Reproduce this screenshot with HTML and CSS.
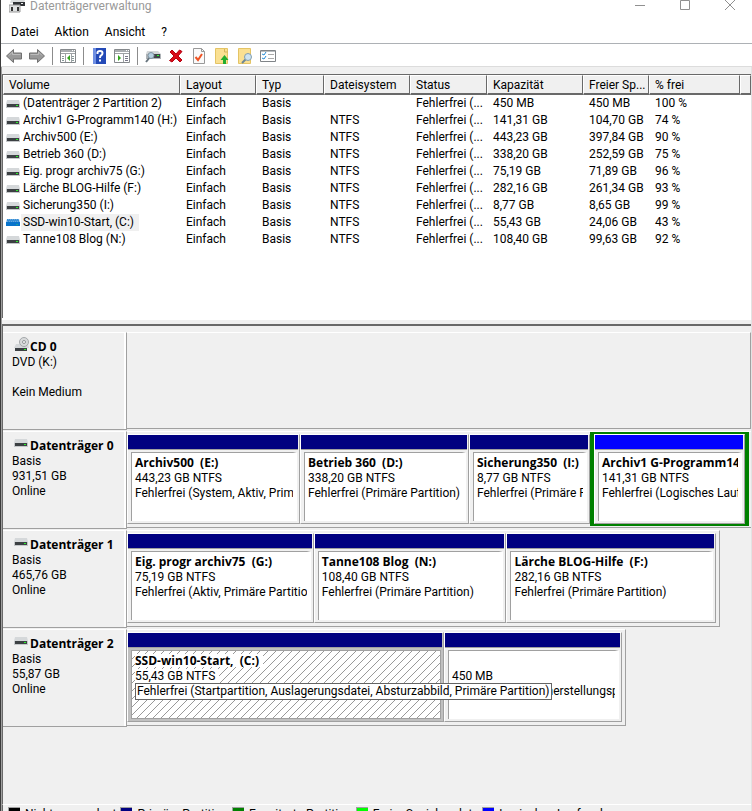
FILE: index.html
```html
<!DOCTYPE html>
<html lang="de">
<head>
<meta charset="utf-8">
<title>Datenträgerverwaltung</title>
<link rel="stylesheet" href="styles.css">
</head>
<body>
<svg class="defs" aria-hidden="true">
  <symbol id="drive" viewBox="0 0 14 8">
    <path d="M1 0h12l1 4H0z" fill="#d5d8da"/>
    <path d="M0 4h14v4H0z" fill="#c4c7c9"/>
    <path d="M1 4h12v3H1z" fill="#3c4043"/>
    <path d="M10 5h2v1h-2z" fill="#2bf02b"/>
  </symbol>
  <symbol id="drive-selected" viewBox="0 0 14 8">
    <path d="M1 0h12l1 4H0z" fill="#68a9de"/>
    <path d="M0 3h14v4H0z" fill="#0873cb"/>
    <path d="M1 1h1m1 0h1m1 0h1m1 0h1m1 0h1m1 0h1M2 2h1m1 0h1m1 0h1m1 0h1m1 0h1m1 0h1" stroke="#0873cb"/>
    <path d="M10 5h2v1h-2z" fill="#16a29a"/>
  </symbol>
</svg>
<div class="window">
  <header class="titlebar">
    <svg class="app-icon" width="16" height="16" viewBox="0 0 16 16"><path d="M2 3h14l-1 3H1z" fill="#d9dcdd"/><path d="M4 5h12v4H4z" fill="#303336"/><path d="M12 6h2v1h-2z" fill="#eee"/><path d="M0 8h11v7H0z" fill="#dfe1e2" stroke="#999" /><path d="M2 10h2v4H2zM8 10h2v4H8z" fill="#333"/></svg>
    <h1>Datenträgerverwaltung</h1>
    <div class="window-buttons">
      <button aria-label="Minimieren"><svg width="10" height="10" viewBox="0 0 10 10"><path d="M0 5.500h10" stroke="#909090"/></svg></button>
      <button aria-label="Maximieren"><svg width="10" height="10" viewBox="0 0 10 10"><path d="M.5.500h9v9h-9z" fill="none" stroke="#909090"/></svg></button>
      <button aria-label="Schließen"><svg width="10" height="10" viewBox="0 0 10 10"><path d="M0 0l10 10M10 0L0 10" stroke="#909090"/></svg></button>
    </div>
  </header>
  <nav class="menubar">
    <button>Datei</button><button>Aktion</button><button>Ansicht</button><button>?</button>
  </nav>
  <div class="toolbar" role="toolbar">
    <button aria-label="Zurück"><svg width="16" height="16" viewBox="0 0 16 16"><path d="M.5 8L7.500 1.500V5h8v6h-8v3.500z" fill="#999" stroke="#717171"/><path d="M3 7.500L6.500 4v2.500h8" fill="none" stroke="#bcbcbc"/></svg></button>
    <button aria-label="Vorwärts"><svg width="16" height="16" viewBox="0 0 16 16"><path d="M15.500 8L8.500 1.500V5h-8v6h8v3.500z" fill="#999" stroke="#717171"/><path d="M1.500 6.500h8V4L13 7.500" fill="none" stroke="#bcbcbc"/></svg></button>
    <span class="separator"></span>
    <button aria-label="Konsolenstruktur"><svg width="16" height="14" viewBox="0 0 16 14"><path d="M.5.500h15v13H.5z" fill="#fff" stroke="#85898c"/><path d="M1 1h14v2H1z" fill="#a9adb0"/><path d="M12 1h1v1h-1zM14 1h1v1h-1z" fill="#fff"/><path d="M1 4.500h14M5.500 5v8M11.500 5v8" stroke="#9da1a4"/><path d="M2 7.500h2M2 9.500h2M2 11.500h2M12 7.500h2M12 9.500h2M12 11.500h2" stroke="#899"/><path d="M10 6v6L7 9z" fill="#32a51c"/></svg></button>
    <span class="separator"></span>
    <button aria-label="Hilfe"><svg width="13" height="16" viewBox="0 0 13 16"><path d="M0 0h13v16H0z" fill="#244ab7"/><path d="M0 0h3v16H0z" fill="#6f8fe2"/><path d="M4.500 6V4.500Q4.500 3 7 3t2.500 2T8 7.500Q7 8 7 10" fill="none" stroke="#fff" stroke-width="2"/><path d="M6 11.500h2v2H6z" fill="#fff"/></svg></button>
    <button aria-label="Aktionsbereich"><svg width="16" height="14" viewBox="0 0 16 14"><path d="M.5.500h15v13H.5z" fill="#fff" stroke="#85898c"/><path d="M1 1h14v2H1z" fill="#a9adb0"/><path d="M12 1h1v1h-1zM14 1h1v1h-1z" fill="#fff"/><path d="M1 4.500h14M9.500 5v8" stroke="#9da1a4"/><path d="M11 7.500h3M11 9.500h3M11 11.500h3" stroke="#778"/><path d="M4 6v6l3-3z" fill="#32a51c"/></svg></button>
    <span class="separator"></span>
    <button aria-label="Datenträger neu einlesen"><svg width="16" height="14" viewBox="0 0 16 14"><path d="M2 2h11l3 3H1z" fill="#d4d7d9"/><path d="M1 5h15v5H1z" fill="#aeb3b7"/><path d="M7 5h8v4H7z" fill="#404548"/><path d="M12 6h2v1h-2z" fill="#2cff35"/><path d="M5 8L1 13" stroke="#66747d" stroke-width="2"/><circle cx="6" cy="6.500" r="3" fill="#b5cfe0" stroke="#8193a0"/></svg></button>
    <button aria-label="Löschen"><svg width="14" height="14" viewBox="0 0 14 14"><path d="M1 3l2-2 4 4 3.500-4L13 2.500 9 7l4 4-2 2-4-4-4 4-2.500-1.500L5 7z" fill="#d90b18" stroke="#b50010"/></svg></button>
    <button aria-label="Eigenschaften"><svg width="12" height="16" viewBox="0 0 12 16"><path d="M.5.500h8l3 3v12H.5z" fill="#fafafa" stroke="#999"/><path d="M8.500.500v3h3" fill="none" stroke="#999"/><path d="M2.500 9L5 12l4-6" fill="none" stroke="#ef5425" stroke-width="2"/></svg></button>
    <button aria-label="Nach oben"><svg width="14" height="16" viewBox="0 0 14 16"><path d="M.5.500h12v15H.5z" fill="#fae092" stroke="#e4c465"/><path d="M9.500 1v3h3" fill="none" stroke="#d3b45e"/><path d="M9.500 7l4 5H11v4H8v-4H5.500z" fill="#22ad2e"/></svg></button>
    <button aria-label="Suchen"><svg width="14" height="16" viewBox="0 0 14 16"><path d="M.5.500h12v15H.5z" fill="#fae092" stroke="#e4c465"/><path d="M8 11l-4 4" stroke="#6c8796" stroke-width="2"/><circle cx="10" cy="9" r="3.500" fill="#cde3f1" stroke="#829eaf"/></svg></button>
    <button aria-label="Optionen"><svg width="16" height="12" viewBox="0 0 16 12"><path d="M.5.500h15v11H.5z" fill="#fff" stroke="#808488"/><path d="M1 1.500h14" stroke="#b9bdc0"/><path d="M2 4l2 1 2-3M2 8l2 1 2-3" fill="none" stroke="#258bd7"/><path d="M8 4.500h6M8 8.500h6" stroke="#aaa"/></svg></button>
  </div>
  <main>
    <section class="volumes">
      <table>
        <colgroup><col class="c-volume"><col class="c-layout"><col class="c-type"><col class="c-fs"><col class="c-status"><col class="c-capacity"><col class="c-free"><col class="c-percent"><col></colgroup>
        <thead><tr><th>Volume</th><th>Layout</th><th>Typ</th><th>Dateisystem</th><th>Status</th><th>Kapazität</th><th>Freier Sp...</th><th>% frei</th><th></th></tr></thead>
        <tbody>
          <tr><td><svg><use href="#drive"/></svg><span>(Datenträger 2 Partition 2)</span></td><td>Einfach</td><td>Basis</td><td></td><td>Fehlerfrei (...</td><td>450 MB</td><td>450 MB</td><td>100 %</td><td></td></tr>
          <tr><td><svg><use href="#drive"/></svg><span>Archiv1 G-Programm140 (H:)</span></td><td>Einfach</td><td>Basis</td><td>NTFS</td><td>Fehlerfrei (...</td><td>141,31 GB</td><td>104,70 GB</td><td>74 %</td><td></td></tr>
          <tr><td><svg><use href="#drive"/></svg><span>Archiv500 (E:)</span></td><td>Einfach</td><td>Basis</td><td>NTFS</td><td>Fehlerfrei (...</td><td>443,23 GB</td><td>397,84 GB</td><td>90 %</td><td></td></tr>
          <tr><td><svg><use href="#drive"/></svg><span>Betrieb 360 (D:)</span></td><td>Einfach</td><td>Basis</td><td>NTFS</td><td>Fehlerfrei (...</td><td>338,20 GB</td><td>252,59 GB</td><td>75 %</td><td></td></tr>
          <tr><td><svg><use href="#drive"/></svg><span>Eig. progr archiv75 (G:)</span></td><td>Einfach</td><td>Basis</td><td>NTFS</td><td>Fehlerfrei (...</td><td>75,19 GB</td><td>71,89 GB</td><td>96 %</td><td></td></tr>
          <tr><td><svg><use href="#drive"/></svg><span>Lärche BLOG-Hilfe (F:)</span></td><td>Einfach</td><td>Basis</td><td>NTFS</td><td>Fehlerfrei (...</td><td>282,16 GB</td><td>261,34 GB</td><td>93 %</td><td></td></tr>
          <tr><td><svg><use href="#drive"/></svg><span>Sicherung350 (I:)</span></td><td>Einfach</td><td>Basis</td><td>NTFS</td><td>Fehlerfrei (...</td><td>8,77 GB</td><td>8,65 GB</td><td>99 %</td><td></td></tr>
          <tr class="selected"><td><svg><use href="#drive-selected"/></svg><span>SSD-win10-Start, (C:)</span></td><td>Einfach</td><td>Basis</td><td>NTFS</td><td>Fehlerfrei (...</td><td>55,43 GB</td><td>24,06 GB</td><td>43 %</td><td></td></tr>
          <tr><td><svg><use href="#drive"/></svg><span>Tanne108 Blog (N:)</span></td><td>Einfach</td><td>Basis</td><td>NTFS</td><td>Fehlerfrei (...</td><td>108,40 GB</td><td>99,63 GB</td><td>92 %</td><td></td></tr>
        </tbody>
      </table>
    </section>
    <div class="splitter"></div>
    <section class="disks">
      <article class="disk">
        <div class="disk-label"><h2><svg class="cd" width="16" height="15" viewBox="0 0 16 15"><path d="M2 7h12l1 4H0z" fill="#d5d8da"/><circle cx="10" cy="5" r="4.500" fill="#d8dadb" stroke="#a4a8aa"/><circle cx="10" cy="5" r="1.500" fill="#fff" stroke="#909496"/><path d="M1 11h12v3H1z" fill="#3c4043"/><path d="M10 12h2v1h-2z" fill="#2bf02b"/></svg>CD 0</h2><p>DVD (K:)</p><p>&nbsp;</p><p>Kein Medium</p></div>
        <div class="track"></div>
      </article>
      <article class="disk">
        <div class="disk-label"><h2><svg class="drive"><use href="#drive"/></svg>Datenträger 0</h2><p>Basis</p><p>931,51 GB</p><p>Online</p></div>
        <div class="track full">
          <div class="partition" style="flex-grow:170"><div class="details"><h3>Archiv500&nbsp; (E:)</h3><p>443,23 GB NTFS</p><p>Fehlerfrei (System, Aktiv, Primäre Partition)</p></div></div>
          <div class="partition" style="flex-grow:166"><div class="details"><h3>Betrieb 360&nbsp; (D:)</h3><p>338,20 GB NTFS</p><p>Fehlerfrei (Primäre Partition)</p></div></div>
          <div class="partition" style="flex-grow:118"><div class="details"><h3>Sicherung350&nbsp; (I:)</h3><p>8,77 GB NTFS</p><p>Fehlerfrei (Primäre Partition)</p></div></div>
          <div class="extended" style="flex-grow:151"><div class="partition logical"><div class="details"><h3>Archiv1 G-Programm140&nbsp; (H:)</h3><p>141,31 GB NTFS</p><p>Fehlerfrei (Logisches Laufwerk)</p></div></div></div>
        </div>
      </article>
      <article class="disk">
        <div class="disk-label"><h2><svg class="drive"><use href="#drive"/></svg>Datenträger 1</h2><p>Basis</p><p>465,76 GB</p><p>Online</p></div>
        <div class="track" style="width:95%">
          <div class="partition" style="flex-grow:187"><div class="details"><h3>Eig. progr archiv75&nbsp; (G:)</h3><p>75,19 GB NTFS</p><p>Fehlerfrei (Aktiv, Primäre Partition)</p></div></div>
          <div class="partition" style="flex-grow:193"><div class="details"><h3>Tanne108 Blog&nbsp; (N:)</h3><p>108,40 GB NTFS</p><p>Fehlerfrei (Primäre Partition)</p></div></div>
          <div class="partition" style="flex-grow:210"><div class="details"><h3>Lärche BLOG-Hilfe&nbsp; (F:)</h3><p>282,16 GB NTFS</p><p>Fehlerfrei (Primäre Partition)</p></div></div>
        </div>
      </article>
      <article class="disk">
        <div class="disk-label"><h2><svg class="drive"><use href="#drive"/></svg>Datenträger 2</h2><p>Basis</p><p>55,87 GB</p><p>Online</p></div>
        <div class="track" style="width:80%">
          <div class="partition active" style="flex-grow:317"><div class="details"><h3><span>SSD-win10-Start,&nbsp; (C:)</span></h3><p><span>55,43 GB NTFS</span></p></div><div class="tooltip" role="tooltip">Fehlerfrei (Startpartition, Auslagerungsdatei, Absturzabbild, Primäre Partition)</div></div>
          <div class="partition" style="flex-grow:177"><div class="details"><h3>&nbsp;</h3><p>450 MB</p><p>Fehlerfrei (Wiederherstellungspartition)</p></div></div>
        </div>
      </article>
    </section>
    <ul class="legend">
      <li class="unallocated">Nicht zugeordnet</li><li class="primary">Primäre Partition</li><li class="extended-key">Erweiterte Partition</li><li class="free">Freier Speicherplatz</li><li class="logical-key">Logisches Laufwerk</li>
    </ul>
  </main>
</div>
</body>
</html>
```
FILE: styles.css
```css
* { box-sizing: border-box; }
body {
  margin: 0;
  overflow: hidden;
  background: #fff;
  color: #000;
  font: 12px/15px Roboto, "Segoe UI", sans-serif;
}
h1, h2, h3, p { margin: 0; font-size: 12px; white-space: nowrap; }
h2, h3 { padding-bottom: 2px; font-family: "Open Sans", "Segoe UI", sans-serif; line-height: 13px; }
button { margin: 0; padding: 0; border: 0; background: none; color: inherit; font: inherit; }
svg { display: block; flex: none; }
.defs { position: absolute; width: 0; height: 0; }

.window {
  display: flex;
  flex-direction: column;
  height: 100vh;
  border-left: 1px solid #3c3c3c;
}
.titlebar {
  display: flex;
  align-items: center;
  flex: none;
  height: 30px;
  margin-top: -10px;
  padding: 0 17px 0 8px;
}
.titlebar h1 { flex: 1; margin-left: 5px; padding-top: 2px; color: #999; font-weight: 400; }
.window-buttons { display: flex; gap: 35px; }
.menubar { display: flex; flex: none; gap: 16px; height: 23px; padding: 1px 10px 0; }
.toolbar {
  display: flex;
  align-items: center;
  flex: none;
  gap: 7px;
  height: 24px;
  padding: 2px 5px 0;
  border-top: 1px solid #adb1b5;
  border-bottom: 1px solid #dcdcdc;
}
.toolbar button { display: flex; flex: none; justify-content: center; width: 16px; }
.separator { width: 1px; height: 18px; background: #8c8c8c; }

main {
  display: flex;
  flex: 1;
  flex-direction: column;
  min-height: 0;
  padding-top: 7px;
  border-right: 1px solid #e3e3e3;
  border-left: 1px solid #a0a0a0;
  background: #f0f0f0;
}
.volumes {
  flex: none;
  height: 244px;
  border-top: 1px solid #696969;
  border-left: 1px solid #696969;
  background: #fff;
}
table { width: 100%; table-layout: fixed; border-collapse: separate; border-spacing: 0; }
.c-volume { width: 177px; }
.c-layout { width: 76px; }
.c-type { width: 68px; }
.c-fs { width: 86px; }
.c-status { width: 77px; }
.c-capacity { width: 96px; }
.c-free { width: 66px; }
.c-percent { width: 91px; }
th {
  height: 20px;
  padding: 1px 0 0 5px;
  border: solid;
  border-width: 1px 1px 2px;
  border-color: #fff #696969 #696969 #fff;
  background: #f0f0f0;
  font-weight: 400;
  text-align: left;
  white-space: nowrap;
}
td { height: 17px; padding: 0 0 0 6px; white-space: nowrap; }
td:first-child { display: flex; align-items: center; gap: 1px; padding-left: 3px; }
td span { padding: 0 5px 0 2px; line-height: 17px; }
td svg, svg.drive { width: 14px; height: 8px; }
.selected span { background: #f0f0f0; }

.splitter {
  flex: none;
  height: 8px;
  border-top: 2px solid #fff;
  border-bottom: 2px solid #696969;
  background: #f0f0f0;
}
.disks { flex: 1; min-height: 0; padding-top: 6px; border-left: 1px solid #696969; }
.disk { display: grid; grid-template-columns: 124px minmax(0, 1fr); align-items: start; height: 99px; }
.disk-label {
  height: 98px;
  padding: 7px 0 0 9px;
  border: solid;
  border-width: 1px 1px 1px 0;
  border-color: #fff #a0a0a0 #a0a0a0;
  box-shadow: inset -2px 0 #fff;
}
.disk-label h2 { display: flex; align-items: center; height: 15px; padding-left: 2px; }
.disk-label h2 svg { margin-top: -5px; }
.disk-label h2 .drive { margin-right: 2px; }
.track {
  display: flex;
  height: 97px;
  padding: 2px 3px 3px 0;
  border: solid;
  border-width: 1px 1px 1px 0;
  border-color: #fff #a0a0a0 #a0a0a0;
}
.full { padding-right: 2px; border-right: 0; }
.partition {
  position: relative;
  flex: 1 1 0;
  min-width: 0;
  height: 90px;
  padding-right: 1px;
  border: 1px solid;
  border-color: #fff #a0a0a0 #a0a0a0 #fff;
  background: #f0f0f0;
}
.partition::before {
  display: block;
  height: 14px;
  border-bottom: 1px solid #a0a0a0;
  background: #000080;
  content: "";
}
.logical::before { background: #00f; }
.details {
  height: 69px;
  margin: 2px 1px 0 3px;
  padding: 3px 0 0 3px;
  border: solid #a0a0a0;
  border-width: 1px 0 0 1px;
  border-right: 4px solid #fff;
  background: #fff;
  overflow: hidden;
}
.extended { display: flex; flex: 1 1 0; min-width: 0; height: 94px; margin: -2px 0; padding: 2px 4px; background: #008000; }
.active { background: #c0c0c0; }
.active .details {
  border: 1px solid #a0a0a0;
  background: linear-gradient(to bottom right, #fff 46%, #999 46% 54%, #fff 54%) 0 0 / 8px 8px;
}
.active span { display: block; width: max-content; padding-right: 4px; background: #fff; }
.tooltip {
  position: absolute;
  z-index: 1;
  top: 50px;
  left: 7px;
  height: 17px;
  padding: 0 1px;
  border: 1px solid #646464;
  background: #fff;
  white-space: nowrap;
}
.legend {
  display: flex;
  flex: none;
  gap: 4px;
  height: 22px;
  margin: 0 0 -15px;
  padding: 2px 0 0 5px;
  border-top: 1px solid #fff;
  border-left: 1px solid #696969;
  list-style: none;
}
.legend li { display: flex; gap: 5px; white-space: nowrap; }
.legend li::before {
  width: 11px;
  height: 11px;
  border: 1px solid #a0a0a0;
  border-right: 0;
  background: #000;
  content: "";
}
.legend .primary::before { background: #000080; }
.legend .extended-key::before { background: #008000; }
.legend .free::before { background: #0f0; }
.legend .logical-key::before { background: #00f; }
```
